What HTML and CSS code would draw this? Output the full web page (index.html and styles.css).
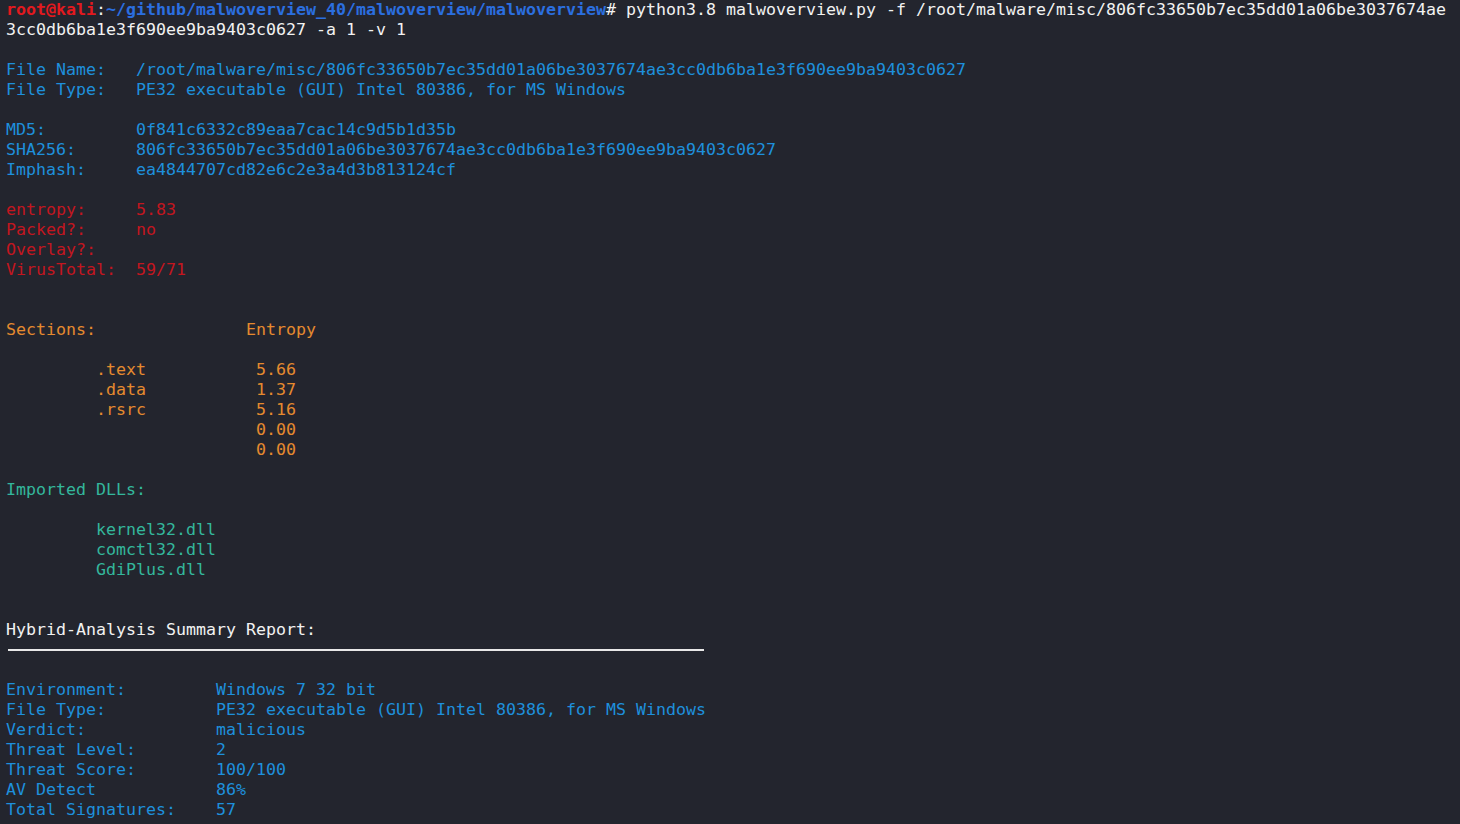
FILE: index.html
```html
<!DOCTYPE html>
<html>
<head>
<meta charset="utf-8">
<link rel="stylesheet" href="styles.css">
</head>
<body>
<div class="term">
<div class="ln"><span class="user">root@kali</span><span class="w">:</span><span class="path">~/github/malwoverview_40/malwoverview/malwoverview</span><span class="w"># python3.8 malwoverview.py -f /root/malware/misc/806fc33650b7ec35dd01a06be3037674ae</span></div>
<div class="ln w">3cc0db6ba1e3f690ee9ba9403c0627 -a 1 -v 1</div>
<div class="ln"></div>
<div class="ln b">File Name:   /root/malware/misc/806fc33650b7ec35dd01a06be3037674ae3cc0db6ba1e3f690ee9ba9403c0627</div>
<div class="ln b">File Type:   PE32 executable (GUI) Intel 80386, for MS Windows</div>
<div class="ln"></div>
<div class="ln b">MD5:         0f841c6332c89eaa7cac14c9d5b1d35b</div>
<div class="ln b">SHA256:      806fc33650b7ec35dd01a06be3037674ae3cc0db6ba1e3f690ee9ba9403c0627</div>
<div class="ln b">Imphash:     ea4844707cd82e6c2e3a4d3b813124cf</div>
<div class="ln"></div>
<div class="ln r">entropy:     5.83</div>
<div class="ln r">Packed?:     no</div>
<div class="ln r">Overlay?:</div>
<div class="ln r">VirusTotal:  59/71</div>
<div class="ln"></div>
<div class="ln"></div>
<div class="ln o">Sections:               Entropy</div>
<div class="ln"></div>
<div class="ln o">         .text           5.66</div>
<div class="ln o">         .data           1.37</div>
<div class="ln o">         .rsrc           5.16</div>
<div class="ln o">                         0.00</div>
<div class="ln o">                         0.00</div>
<div class="ln"></div>
<div class="ln g">Imported DLLs:</div>
<div class="ln"></div>
<div class="ln g">         kernel32.dll</div>
<div class="ln g">         comctl32.dll</div>
<div class="ln g">         GdiPlus.dll</div>
<div class="ln"></div>
<div class="ln"></div>
<div class="ln w">Hybrid-Analysis Summary Report:</div>
<div class="ln rule-row"><div class="rule"></div></div>
<div class="ln"></div>
<div class="ln b">Environment:         Windows 7 32 bit</div>
<div class="ln b">File Type:           PE32 executable (GUI) Intel 80386, for MS Windows</div>
<div class="ln b">Verdict:             malicious</div>
<div class="ln b">Threat Level:        2</div>
<div class="ln b">Threat Score:        100/100</div>
<div class="ln b">AV Detect            86%</div>
<div class="ln b">Total Signatures:    57</div>
</div>
</body>
</html>
```

FILE: styles.css
```css
html, body {
  margin: 0;
  padding: 0;
  background: #23252e;
  overflow: hidden;
}
.term {
  width: 1460px;
  height: 824px;
  padding: 0 0 0 6px;
  box-sizing: border-box;
  font-family: "DejaVu Sans Mono", "Liberation Mono", monospace;
  font-size: 16.61px;
  color: #e6e6e6;
}
.ln {
  height: 20px;
  line-height: 20px;
  white-space: pre;
}
.user {
  color: #e3191e;
  font-weight: bold;
}
.path {
  color: #2b6fe0;
  font-weight: bold;
}
.w { color: #f2f2f2; }
.b { color: #1e90dc; }
.r { color: #c3161f; }
.o { color: #e58a2e; }
.g { color: #33b79c; }
.rule-row {
  display: flex;
  align-items: center;
}
.rule {
  width: 696px;
  margin-left: 2px;
  height: 2px;
  background: #e8e8e8;
}
```
